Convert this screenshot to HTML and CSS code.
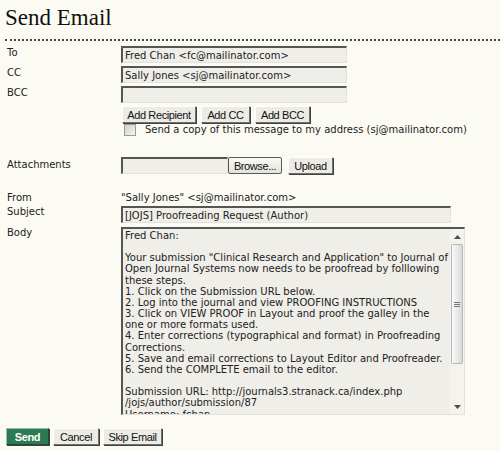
FILE: index.html
```html
<!DOCTYPE html>
<html>
<head>
<meta charset="utf-8">
<link rel="stylesheet" href="styles.css">
</head>
<body>
<h1 class="title">Send Email</h1>
<div class="sep"></div>
<div class="form">
  <div class="row r-to"><div class="label">To</div><div class="field"><input class="txt w225" type="text" value="Fred Chan &lt;fc@mailinator.com&gt;"></div></div>
  <div class="row r-cc"><div class="label">CC</div><div class="field"><input class="txt w225" type="text" value="Sally Jones &lt;sj@mailinator.com&gt;"></div></div>
  <div class="row r-bcc"><div class="label">BCC</div><div class="field"><input class="txt w225" type="text" value=""></div></div>
  <div class="row r-btns"><div class="label"></div><div class="field btns"><button class="btn b-rec">Add Recipient</button><button class="btn b-cc">Add CC</button><button class="btn b-bcc">Add BCC</button></div></div>
  <div class="row r-copy"><div class="label"></div><div class="field copy"><span class="chk"></span><span>Send a copy of this message to my address (sj@mailinator.com)</span></div></div>
  <div class="row r-att"><div class="label">Attachments</div><div class="field att"><span class="txt file"></span><button class="btn browse">Browse...</button><button class="btn upload">Upload</button></div></div>
  <div class="row r-from"><div class="label">From</div><div class="field">"Sally Jones" &lt;sj@mailinator.com&gt;</div></div>
  <div class="row r-subj"><div class="label">Subject</div><div class="field"><input class="txt w329" type="text" value="[JOJS] Proofreading Request (Author)"></div></div>
  <div class="row r-body"><div class="label">Body</div><div class="field">
    <div class="area">
      <div class="area-text">Fred Chan:<br><br>Your submission "Clinical Research and Application" to Journal of Open Journal Systems now needs to be proofread by folllowing these steps.<br>1. Click on the Submission URL below.<br>2. Log into the journal and view PROOFING INSTRUCTIONS<br>3. Click on VIEW PROOF in Layout and proof the galley in the one or more formats used.<br>4. Enter corrections (typographical and format) in Proofreading Corrections.<br>5. Save and email corrections to Layout Editor and Proofreader.<br>6. Send the COMPLETE email to the editor.<br><br>Submission URL: http://journals3.stranack.ca/index.php<br>/jojs/author/submission/87<br>Username: fchan</div>
      <div class="sb">
        <div class="sb-up"><svg width="7" height="4" viewBox="0 0 7 4"><path d="M0 4 L3.5 0 L7 4 Z" fill="#4d4d4d"/></svg></div>
        <div class="sb-track"><div class="sb-thumb"><span class="grip"></span><span class="grip"></span><span class="grip"></span></div></div>
        <div class="sb-down"><svg width="7" height="4" viewBox="0 0 7 4"><path d="M0 0 L7 0 L3.5 4 Z" fill="#4d4d4d"/></svg></div>
      </div>
    </div>
  </div></div>
</div>
<div class="actions"><button class="btn send">Send</button><button class="btn b-cancel">Cancel</button><button class="btn b-skip">Skip Email</button></div>
</body>
</html>
```
FILE: styles.css
```css
html, body { margin: 0; padding: 0; }
body {
  background: #fbfbf3;
  font-family: "DejaVu Sans", Verdana, sans-serif;
  font-size: 10px;
  color: #222;
  width: 500px;
  height: 451px;
  overflow: hidden;
}
.title {
  font-family: "Liberation Serif", "Times New Roman", serif;
  font-weight: normal;
  font-size: 23px;
  margin: 0;
  padding: 5px 0 0 5px;
  height: 34px;
  line-height: 26px;
  color: #111;
}
.sep {
  margin-left: 5px;
  border-top: 2px dotted #444;
  height: 0;
}
.form { padding-top: 5px; }
.row { display: flex; align-items: flex-start; }
.label { width: 114px; padding-left: 7px; flex: none; }
.field { flex: none; }
.txt {
  box-sizing: border-box;
  height: 17px;
  border: 1px solid #e2e1da;
  border-top: 2px solid #555;
  border-left: 2px solid #555;
  background: #efeee8;
  font-family: "DejaVu Sans", Verdana, sans-serif;
  font-size: 10px;
  color: #222;
  padding: 0 2px;
  margin: 0;
  display: block;
}
.w225 { width: 226px; }
.w329 { width: 330px; }
.r-to, .r-cc, .r-bcc { height: 20px; line-height: 12px; }
.r-to .label, .r-cc .label, .r-bcc .label { padding-top: 1px; }
.btn {
  box-sizing: border-box;
  font-family: "Liberation Sans", Arial, sans-serif;
  font-size: 11px;
  letter-spacing: -0.4px;
  height: 17px;
  padding: 0;
  margin: 0;
  background: #ecebe5;
  color: #111;
  border: 1px solid;
  border-color: #fff #707070 #707070 #fff;
  box-shadow: 1px 1px 0 #404040;
  line-height: 14px;
  white-space: nowrap;
  text-align: center;
}
.btns { display: flex; gap: 5px; padding-left: 1px; }
.b-rec { width: 74px; }
.b-cc { width: 49px; }
.b-bcc { width: 55px; }
.r-btns { height: 18px; }
.r-copy { height: 33px; }
.copy { display: flex; align-items: center; gap: 9px; padding-left: 3px; line-height: 12px; }
.chk {
  width: 12px; height: 12px; box-sizing: border-box;
  border: 1px solid #9a9a9a;
  background: linear-gradient(135deg, #d0d0d0, #f4f4f4);
  display: inline-block;
}
.r-att { height: 35px; }
.r-att .label { padding-top: 2px; }
.att { display: flex; align-items: flex-start; gap: 0; }
.file { width: 107px; }
.browse { margin-left: 0; width: 54px; border-radius: 2px; border: 1px solid #5a5a5a; box-shadow: none; background: linear-gradient(#fafaf6, #e2e1da); }
.upload { margin-left: 6px; width: 45px; }
.r-from { height: 14px; line-height: 12px; }
.r-subj { height: 21px; }
.area {
  box-sizing: border-box;
  width: 344px;
  height: 188px;
  border: 1px solid #e2e1da;
  border-top: 2px solid #555;
  border-left: 2px solid #555;
  background: #efeee8;
  display: flex;
}
.area-text {
  flex: 1;
  padding: 1px 2px 0 2px;
  line-height: 11.15px;
  color: #222;
  overflow: hidden;
}
.sb { width: 14px; display: flex; flex-direction: column; background: #f4f3ee; }
.sb-up, .sb-down { height: 15px; display: flex; align-items: center; justify-content: center; }
.sb-track { flex: 1; padding: 0 1px; }
.sb-thumb {
  height: 120px; box-sizing: border-box;
  border: 1px solid #b8b8b8; border-radius: 2px;
  background: linear-gradient(90deg, #fbfbfb, #d8d8d8);
  display: flex; flex-direction: column; align-items: center; justify-content: center; gap: 1px;
}
.grip { width: 6px; height: 1px; background: #777; display: block; }
.actions { display: flex; gap: 4px; padding: 13px 0 0 6px; }
.send { background: #2d7a52; color: #fff; font-weight: bold; width: 43px; border-color: #8fbfa6 #1c4a32 #1c4a32 #8fbfa6; }
.b-cancel { width: 46px; }
.b-skip { width: 59px; }
```
